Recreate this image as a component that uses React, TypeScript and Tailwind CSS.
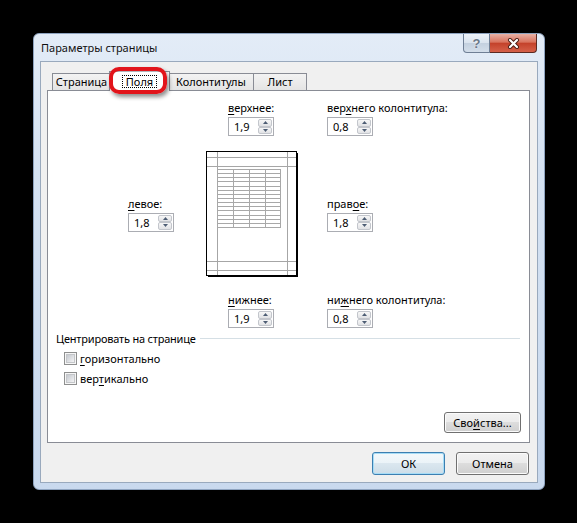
import React from "react";
import clsx from "clsx";

const ui = "font-['Noto_Sans','Liberation_Sans',sans-serif] text-[11px] text-black";

// access-key letter, underlined the way Windows draws mnemonics
function Key({ children }: { children: React.ReactNode }) {
  return <span className="underline decoration-1 underline-offset-[2px]">{children}</span>;
}

function Arrow({ up }: { up?: boolean }) {
  return (
    <svg width="5" height="3" viewBox="0 0 5 3" className="block">
      <path d={up ? "M0 3 L2.5 0 L5 3 Z" : "M0 0 L2.5 3 L5 0 Z"} fill="#4d5d74" />
    </svg>
  );
}

function SpinButton({ up }: { up?: boolean }) {
  return (
    <div className="flex flex-1 items-center justify-center rounded-[2px] border border-[#c3c6cc] bg-[linear-gradient(180deg,#f7f7f7,#e1e2e5)]">
      <Arrow up={up} />
    </div>
  );
}

function Spinner({ value }: { value: string }) {
  return (
    <div className="flex h-[19px] w-[46px] items-center border border-[#abadb3] bg-white p-px">
      <span className="flex-1 pl-[4px] leading-none">{value}</span>
      <div className="flex h-full w-[14px] flex-col">
        <SpinButton up />
        <SpinButton />
      </div>
    </div>
  );
}

function Field({ label, value }: { label: React.ReactNode; value: string }) {
  return (
    <div className="flex flex-col gap-[2px]">
      <span className="h-[15px] leading-[15px] whitespace-nowrap">{label}</span>
      <Spinner value={value} />
    </div>
  );
}

function PagePreview() {
  const rows = Array.from({ length: 15 }, (_, i) => Math.round(19 + (i * 58) / 14) + 0.5);
  const cols = [12, 28, 44, 60, 75];
  return (
    <svg width="93" height="127" viewBox="0 0 93 127" shapeRendering="crispEdges" className="block">
      <rect x="1" y="1" width="91" height="125" fill="#fff" />
      {[7, 16, 111, 120].map((y) => (
        <line key={y} x1="2" x2="91" y1={y + 0.5} y2={y + 0.5} stroke="#a6a6a6" />
      ))}
      {[12, 82].map((x) => (
        <line key={x} x1={x + 0.5} x2={x + 0.5} y1="2" y2="125" stroke="#a6a6a6" />
      ))}
      {rows.map((y) => (
        <line key={y} x1="12" x2="76" y1={y} y2={y} stroke="#a8a8a8" />
      ))}
      {cols.map((x) => (
        <line key={x} x1={x + 0.5} x2={x + 0.5} y1="19" y2="78" stroke="#a8a8a8" />
      ))}
      <path d="M1.5 1.5 H91.5 V125.5 H1.5 Z" fill="none" stroke="#000" />
      <rect x="92" y="3" width="1" height="124" fill="#000" />
      <rect x="3" y="126" width="90" height="1" fill="#000" />
    </svg>
  );
}

function CheckBox({ label }: { label: React.ReactNode }) {
  return (
    <div className="flex h-[20px] items-center gap-[3px]">
      <span className="flex h-[13px] w-[13px] items-center justify-center border border-[#8e8f8f] bg-[#f6f6f6]">
        <span className="h-[9px] w-[9px] border border-[#c4c6c9] bg-[linear-gradient(135deg,#c5c9cf,#f3f3f4)]" />
      </span>
      <span className="leading-none">{label}</span>
    </div>
  );
}

function Button({ children, primary, className }: { children: React.ReactNode; primary?: boolean; className?: string }) {
  return (
    <div
      className={clsx(
        "flex items-center justify-center rounded-[3px] border leading-none",
        primary
          ? "border-[#3c7fb1] bg-[linear-gradient(180deg,#f3f8fb_0%,#ebf3f8_49%,#dbe7ef_50%,#cddde8_100%)] shadow-[inset_0_0_0_1px_#a6dcf6]"
          : "border-[#707070] bg-[linear-gradient(180deg,#f2f2f2_0%,#ebebeb_49%,#dddddd_50%,#cfcfcf_100%)] shadow-[inset_0_0_0_1px_#fbfbfb]",
        className
      )}
    >
      {children}
    </div>
  );
}

function Tab({ label, width }: { label: string; width: string }) {
  return (
    <div
      className={clsx(
        "flex h-[18px] items-center justify-center border border-b-0 border-[#898c95] bg-[linear-gradient(180deg,#f3f3f3,#e3e3e3)] pb-[1px]",
        width
      )}
    >
      {label}
    </div>
  );
}

export default function App() {
  return (
    <div className={clsx("min-h-screen bg-black pl-[33px] pt-[33px]", ui)}>
      {/* window frame */}
      <div className="flex h-[457px] w-[512px] flex-col rounded-[6px] border border-[#8ea3bf] bg-[linear-gradient(180deg,#e3ecf7_0%,#d5e2f2_30%,#c9d9ee_100%)] px-[6px] pb-[6px]">
        <div className="flex h-[27px] items-start">
          <span className="mt-[6px] pl-px text-[11px] leading-[16px] text-[#111]">Параметры страницы</span>
          <div className="ml-auto mr-px flex">
            <div className="flex h-[19px] w-[27px] items-center justify-center rounded-bl-[4px] border border-t-0 border-[#6f7f95] bg-[linear-gradient(180deg,#eef3f9_0%,#d9e3ee_50%,#c3d0df_51%,#d3deea_100%)] font-['Liberation_Sans',sans-serif] text-[13px] font-bold leading-none text-[#6b7889] [text-shadow:0_0_2px_#fff]">
              ?
            </div>
            <div className="flex h-[19px] w-[47px] items-center justify-center rounded-br-[4px] border border-l-0 border-t-0 border-[#5b2a22] bg-[linear-gradient(180deg,#eab1a4_0%,#d9735e_45%,#c4422b_52%,#d5614a_100%)]">
              <svg width="13" height="11" viewBox="0 0 13 11">
                <path d="M3 2 L10 9 M10 2 L3 9" stroke="#4a1c14" strokeWidth="4" strokeLinecap="round" />
                <path d="M3 2 L10 9 M10 2 L3 9" stroke="#fff" strokeWidth="2.2" strokeLinecap="round" />
              </svg>
            </div>
          </div>
        </div>

        {/* client area */}
        <div className="flex flex-1 flex-col border border-[#99a9bd] bg-[#f0f0f0] pl-[6px] pr-[7px] pt-[9px]">
          <div className="flex h-[20px] items-end pl-[5px]">
            <Tab label="Страница" width="w-[59px]" />
            <div className="relative z-10 -mx-[2px] flex h-[20px] w-[61px] items-center justify-center border border-b-0 border-[#898c95] bg-white pb-[1px]">
              <span className="border border-dotted border-black px-[3px] leading-[11px]">Поля</span>
              <div className="absolute -left-px -top-[5px] h-[27px] w-[58px] rounded-[10px] border-[4px] border-[#e2141b] shadow-[2px_3px_4px_rgba(0,0,0,0.45),inset_0_1px_2px_rgba(255,255,255,0.5)]" />
            </div>
            <Tab label="Колонтитулы" width="w-[86px]" />
            <Tab label="Лист" width="-ml-px w-[54px]" />
          </div>

          {/* tab page */}
          <div className="-mt-px flex h-[353px] flex-col border border-[#898c95] bg-white">
            <div className="grid grid-cols-[77px_93px_auto] pl-[80px] pt-[9px]">
              <div />
              <div className="pl-[23px]">
                <Field label={<><Key>в</Key>ерхнее:</>} value="1,9" />
              </div>
              <div className="pl-[29px]">
                <Field label={<>вер<Key>х</Key>него колонтитула:</>} value="0,8" />
              </div>

              <div className="mt-[14px] self-center">
                <Field label={<><Key>л</Key>евое:</>} value="1,8" />
              </div>
              <div className="mt-[14px]">
                <PagePreview />
              </div>
              <div className="mt-[14px] self-center pl-[29px]">
                <Field label={<>прав<Key>о</Key>е:</>} value="1,8" />
              </div>

              <div />
              <div className="mt-[15px] pl-[23px]">
                <Field label={<><Key>н</Key>ижнее:</>} value="1,9" />
              </div>
              <div className="mt-[15px] pl-[29px]">
                <Field label={<>ни<Key>ж</Key>него колонтитула:</>} value="0,8" />
              </div>
            </div>

            <div className="mt-[3px] flex h-[15px] items-center gap-[4px] pl-[8px] pr-[9px]">
              <span className="leading-[15px] whitespace-nowrap tracking-[-0.2px]">Центрировать на странице</span>
              <div className="h-px flex-1 bg-[#d5dfe5]" />
            </div>
            <div className="mt-[2px] flex flex-col pl-[16px]">
              <CheckBox label={<><Key>г</Key>оризонтально</>} />
              <CheckBox label={<>вер<Key>т</Key>икально</>} />
            </div>

            <Button className="mb-[9px] mr-[8px] mt-auto h-[21px] w-[77px] self-end">
              Сво<Key>й</Key>ства...
            </Button>
          </div>

          <div className="mt-[9px] flex justify-end gap-[11px] pr-[1px]">
            <Button primary className="h-[23px] w-[73px]">
              ОК
            </Button>
            <Button className="h-[23px] w-[73px]">Отмена</Button>
          </div>
        </div>
      </div>
    </div>
  );
}
